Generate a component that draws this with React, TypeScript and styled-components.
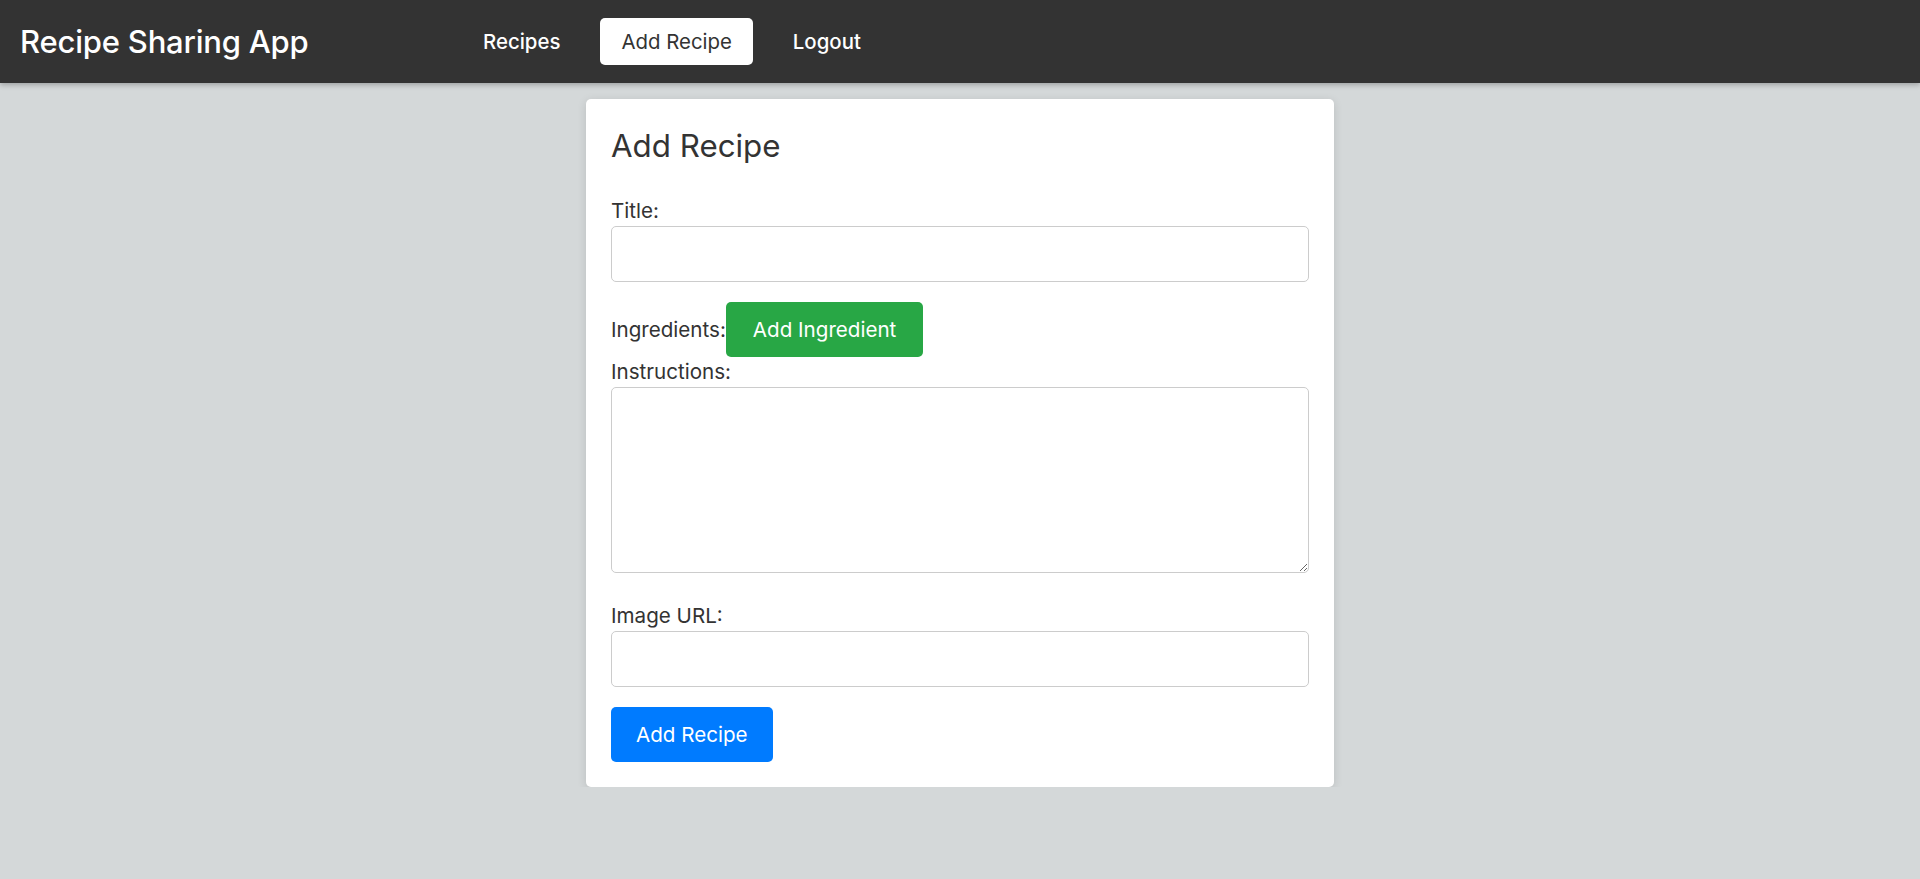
import React from 'react'
import styled, { createGlobalStyle } from 'styled-components'

const GlobalStyle = createGlobalStyle`
  html, body {
    margin: 0;
    padding: 0;
    background: #d4d8d9;
    font-family: Inter, 'Noto Sans', sans-serif;
    color: #333333;
  }
  * {
    box-sizing: border-box;
  }
`

const NavBar = styled.nav`
  display: flex;
  align-items: center;
  height: 83px;
  padding: 0 20px;
  background: #333333;
  box-shadow: 0 2px 5px rgba(0, 0, 0, 0.25);
  position: relative;
  z-index: 1;
`

const Brand = styled.div`
  flex: 0 0 443px;
  font-size: 31px;
  font-weight: 500;
  color: #ffffff;
  letter-spacing: -0.2px;
`

const NavLinks = styled.div`
  display: flex;
  align-items: center;
  gap: 20px;
`

const NavLink = styled.a<{ $active?: boolean }>`
  display: flex;
  align-items: center;
  height: 47px;
  padding: 0 ${({ $active }) => ($active ? 21 : 20)}px;
  border-radius: 5px;
  font-size: 20.4px;
  font-weight: ${({ $active }) => ($active ? 400 : 500)};
  color: ${({ $active }) => ($active ? '#333333' : '#ffffff')};
  background: ${({ $active }) => ($active ? '#ffffff' : 'transparent')};
  text-decoration: none;
  cursor: pointer;
`

const Main = styled.main`
  display: flex;
  justify-content: center;
  padding-top: 16px;
`

const Card = styled.form`
  width: 748px;
  padding: 25px;
  background: #ffffff;
  border-radius: 5px;
  box-shadow: 0 2px 10px rgba(0, 0, 0, 0.12);
`

const Heading = styled.h2`
  margin: 0 0 27px;
  font-size: 31.3px;
  line-height: 45px;
  font-weight: 400;
  color: #333333;
`

const Label = styled.label`
  display: block;
  font-size: 20.6px;
  line-height: 30px;
  color: #333333;
`

const InlineLabel = styled(Label)`
  display: inline;
`

const TextInput = styled.input<{ $space?: number }>`
  display: block;
  width: 100%;
  height: 56px;
  margin: 0 0 ${({ $space }) => $space ?? 0}px;
  padding: 0 12px;
  border: 1px solid #cccccc;
  border-radius: 5px;
  font: inherit;
  font-size: 20px;
`

const TextArea = styled.textarea`
  display: block;
  width: 100%;
  height: 186px;
  margin: 0 0 28px;
  padding: 12px;
  border: 1px solid #cccccc;
  border-radius: 5px;
  font: inherit;
  font-size: 20px;
`

const Row = styled.div`
  display: flex;
  align-items: baseline;
`

const Button = styled.button<{ $color: string; $pad?: number }>`
  height: 55px;
  padding: 0 ${({ $pad }) => $pad ?? 25}px;
  border: none;
  border-radius: 5px;
  background: ${({ $color }) => $color};
  color: #ffffff;
  font-family: inherit;
  font-size: 20.6px;
  line-height: 55px;
  cursor: pointer;
`

export default function App() {
  return (
    <>
      <GlobalStyle />
      <NavBar>
        <Brand>Recipe Sharing App</Brand>
        <NavLinks>
          <NavLink>Recipes</NavLink>
          <NavLink $active>Add Recipe</NavLink>
          <NavLink>Logout</NavLink>
        </NavLinks>
      </NavBar>
      <Main>
        <Card onSubmit={(e) => e.preventDefault()}>
          <Heading>Add Recipe</Heading>
          <Label htmlFor='title'>Title:</Label>
          <TextInput id='title' type='text' $space={20} />
          <Row>
            <InlineLabel>Ingredients:</InlineLabel>
            <Button type='button' $color='#28a745' $pad={27}>
              Add Ingredient
            </Button>
          </Row>
          <Label htmlFor='instructions'>Instructions:</Label>
          <TextArea id='instructions' />
          <Label htmlFor='image'>Image URL:</Label>
          <TextInput id='image' type='text' $space={20} />
          <Button type='submit' $color='#007bff'>
            Add Recipe
          </Button>
        </Card>
      </Main>
    </>
  )
}
